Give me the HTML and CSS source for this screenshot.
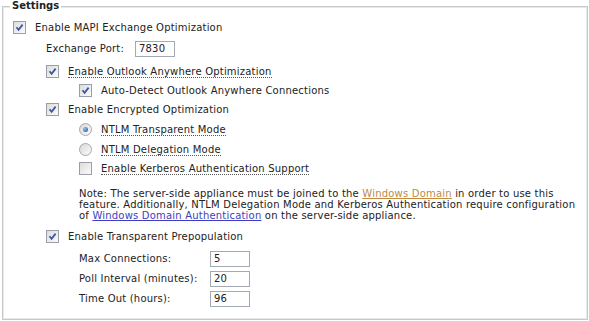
FILE: index.html
```html
<!DOCTYPE html>
<html><head>
    <meta charset="UTF-8">
    <title>Settings</title>
    <link rel="stylesheet" href="styles.css"></head><body>
<fieldset class="settings">
    <legend>Settings</legend>

    <div class="row r1">
        <span class="cb"><svg width="11" height="11" viewBox="0 0 11 11"><path d="M2.5 5.2 L4.6 7.8 L8.6 2.6" /></svg></span>
        <span>Enable MAPI Exchange Optimization</span>
    </div>

    <div class="row r2 lvl1">
        <span class="label port-label">Exchange Port:</span>
        <input type="text" class="field" value="7830">
    </div>

    <div class="row r3 lvl1">
        <span class="cb"><svg width="11" height="11" viewBox="0 0 11 11"><path d="M2.5 5.2 L4.6 7.8 L8.6 2.6" /></svg></span>
        <span class="tip">Enable Outlook Anywhere Optimization</span>
    </div>

    <div class="row lvl2">
        <span class="cb"><svg width="11" height="11" viewBox="0 0 11 11"><path d="M2.5 5.2 L4.6 7.8 L8.6 2.6" /></svg></span>
        <span>Auto-Detect Outlook Anywhere Connections</span>
    </div>

    <div class="row lvl1">
        <span class="cb"><svg width="11" height="11" viewBox="0 0 11 11"><path d="M2.5 5.2 L4.6 7.8 L8.6 2.6" /></svg></span>
        <span>Enable Encrypted Optimization</span>
    </div>

    <div class="row r6 lvl2">
        <span class="rb on"></span>
        <span class="tip">NTLM Transparent Mode</span>
    </div>

    <div class="row r7 lvl2">
        <span class="rb"></span>
        <span class="tip">NTLM Delegation Mode</span>
    </div>

    <div class="row lvl2">
        <span class="cb off"></span>
        <span class="tip">Enable Kerberos Authentication Support</span>
    </div>

    <p class="note lvl2">Note: The server-side appliance must be joined to the <a href="#" class="visited">Windows Domain</a> in order to use this feature. Additionally, NTLM Delegation Mode and Kerberos Authentication require configuration of <a href="#">Windows Domain Authentication</a> on the server-side appliance.</p>

    <div class="row r9 lvl1">
        <span class="cb"><svg width="11" height="11" viewBox="0 0 11 11"><path d="M2.5 5.2 L4.6 7.8 L8.6 2.6" /></svg></span>
        <span>Enable Transparent Prepopulation</span>
    </div>

    <div class="row r10 lvl2">
        <span class="label prepop-label">Max Connections:</span>
        <input type="text" class="field" value="5">
    </div>
    <div class="row r11 lvl2">
        <span class="label prepop-label">Poll Interval (minutes):</span>
        <input type="text" class="field" value="20">
    </div>
    <div class="row r11 lvl2">
        <span class="label prepop-label">Time Out (hours):</span>
        <input type="text" class="field" value="96">
    </div>
</fieldset>
</body></html>
```

FILE: styles.css
```css
body {
    font-family: "DejaVu Sans", Verdana, sans-serif;
    font-size: 10px;
    letter-spacing: 0.2px;
    color: #222;
    margin: 0;
    background-color: white;
}
.settings {
    margin: 0 1px 0 2px;
    padding: 6px 10px 11px 10px;
    border: 1px solid #c8c8c8;
    box-shadow: inset 0 0 0 1px #e8e8e8;
    min-width: 0;
}
.settings legend {
    font-weight: bold;
    padding: 0 2px;
    margin-left: -3px;
    line-height: 12px;
    letter-spacing: 0;
    background-color: white;
}
.row {
    display: flex;
    align-items: center;
    height: 19px;
}
.lvl1 { padding-left: 33px; }
.lvl2 { padding-left: 66px; }
.r2 { margin-top: 2px; }
.r3 { margin-top: 4px; }
.r6 { margin-top: 1px; }
.r7 { margin-top: 1px; }
.r9 { margin-top: 6px; }
.r10 { margin-top: 3px; }
.r11 { margin-top: 1px; }

.cb {
    width: 11px;
    height: 11px;
    border: 1px solid #9b9dab;
    background: linear-gradient(135deg, #dcdcd8, #fbfbfb);
    margin-right: 9px;
    flex-shrink: 0;
}
.cb svg {
    display: block;
}
.cb path {
    fill: none;
    stroke: #3d55a8;
    stroke-width: 1.8;
}
.rb {
    width: 11px;
    height: 11px;
    border: 1px solid #a6a6ae;
    border-radius: 50%;
    background: linear-gradient(135deg, #d8d8d4, #fbfbfb);
    margin-right: 9px;
    flex-shrink: 0;
    display: flex;
    align-items: center;
    justify-content: center;
}
.rb.on::after {
    content: "";
    width: 5px;
    height: 5px;
    border-radius: 50%;
    background: radial-gradient(circle at 35% 35%, #8ec2f0, #1d4f95);
}
.tip {
    border-bottom: 1px dotted #555;
    line-height: 11px;
}
.label {
    flex-shrink: 0;
}
.port-label { width: 89px; }
.prepop-label { width: 131px; }
.field {
    width: 40px;
    height: 16px;
    box-sizing: border-box;
    border: 1px solid #a4aab4;
    padding: 0 3px;
    font-family: "DejaVu Sans", Verdana, sans-serif;
    font-size: 10px;
    letter-spacing: 0.2px;
    color: #222;
}
.note {
    margin: 10px 0 0 0;
    line-height: 11px;
    width: 500px;
}
.note a {
    color: #3e3ec2;
}
.note a.visited {
    color: #c08a3e;
}
```
